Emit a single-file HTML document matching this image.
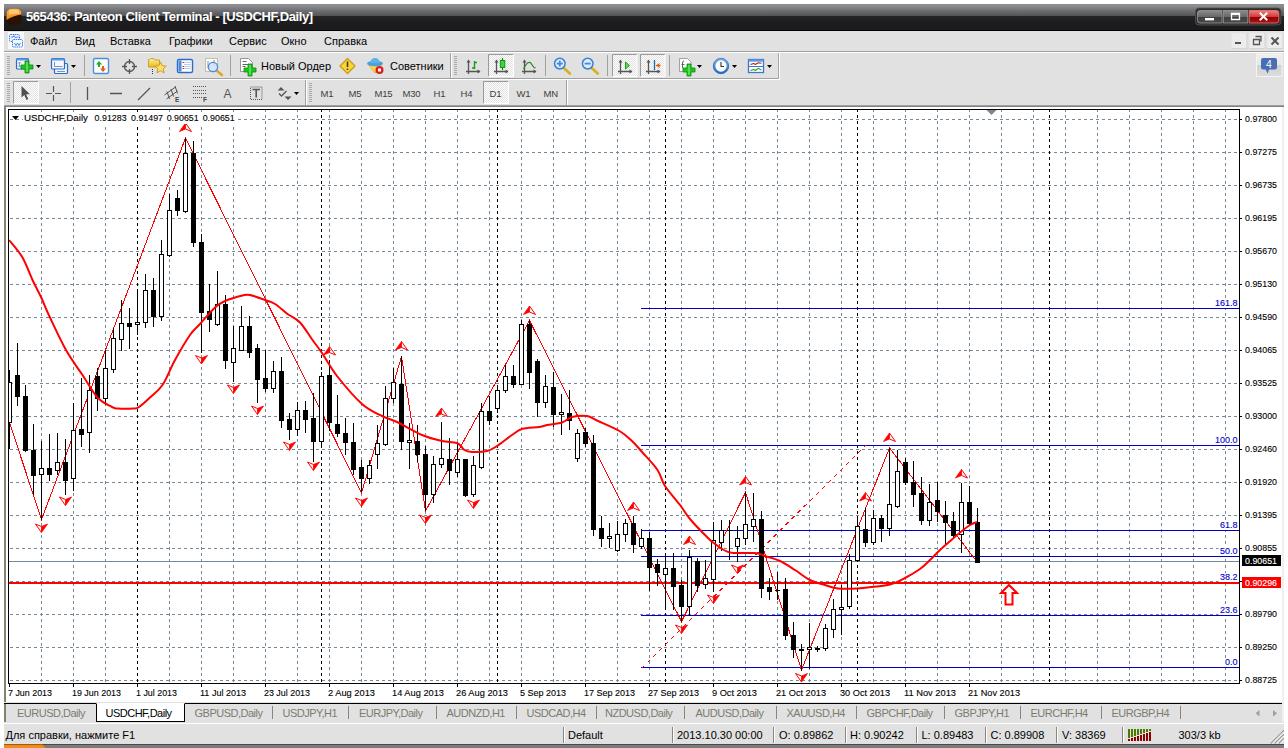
<!DOCTYPE html>
<html><head><meta charset="utf-8"><title>565436: Panteon Client Terminal - [USDCHF,Daily]</title>
<style>
*{box-sizing:border-box;margin:0;padding:0}
html,body{width:1288px;height:748px;overflow:hidden;background:#fff}
body{position:relative;font-family:"Liberation Sans",Arial,sans-serif;font-size:11px;color:#000}
.abs{position:absolute}
#titlebar{left:4px;top:4px;width:1280px;height:27px;background:linear-gradient(#88898d 0,#8e8f93 1.5px,#6c6d70 7px,#545456 11.9px,#252527 12px,#1d1d1f 18px,#1b1b1d 25.5px,#000 26px)}
#title{left:26px;top:8px;color:#fff;font-weight:bold;font-size:13px;letter-spacing:-0.42px;white-space:nowrap;line-height:18px}
#menubar{left:4px;top:31px;width:1280px;height:21px;background:#e1e1e1}
.mi{top:34px;line-height:14px;white-space:nowrap;font-size:11px}
#tb{left:4px;top:52px;width:1280px;height:54px;background:#e1e1e1}
.hl{height:1px;left:4px;width:1280px}
.tab{top:706px;line-height:14px;white-space:nowrap;color:#7d7b6e;font-size:11px;letter-spacing:-0.5px}
.tsep{top:706px;width:1px;height:13px;background:#8a887c}
.st{top:728px;line-height:14px;white-space:nowrap;font-size:11px}
.ssep{top:727px;width:1px;height:16px;background:#868686;border-right:1px solid #fff;box-sizing:content-box}
.tf{top:88px;line-height:12px;font-size:9.5px;color:#404040;white-space:nowrap;letter-spacing:-0.2px}
.vsep{width:1px;background:#a0a0a0}
.tbt{top:59px;line-height:14px;white-space:nowrap;font-size:11px}
</style></head><body>
<div id="titlebar" class="abs"></div>
<div id="title" class="abs">565436: Panteon Client Terminal - [USDCHF,Daily]</div>
<div id="menubar" class="abs"></div>
<div class="abs mi" style="left:30px">Файл</div>
<div class="abs mi" style="left:75px">Вид</div>
<div class="abs mi" style="left:110px">Вставка</div>
<div class="abs mi" style="left:169px">Графики</div>
<div class="abs mi" style="left:229px">Сервис</div>
<div class="abs mi" style="left:281px">Окно</div>
<div class="abs mi" style="left:324px">Справка</div>
<div id="tb" class="abs"></div>
<div class="abs hl" style="top:51px;background:#a0a0a0"></div><div class="abs hl" style="top:52px;background:#fff"></div>
<div class="abs hl" style="top:78px;background:#a0a0a0;width:776px"></div><div class="abs hl" style="top:79px;background:#fff;width:776px"></div>
<div class="abs hl" style="top:105px;background:#a0a0a0"></div>
<div class="abs hl" style="top:106px;background:#808080"></div>
<svg id="icons" width="1288" height="108" viewBox="0 0 1288 108" style="position:absolute;left:0;top:0" font-family="Liberation Sans, Arial, sans-serif">
<defs><linearGradient id="gOr" x1="0" y1="0" x2="0" y2="1"><stop offset="0" stop-color="#ffb24a"/><stop offset="1" stop-color="#f28a14"/></linearGradient><linearGradient id="gBtn" x1="0" y1="0" x2="0" y2="1"><stop offset="0" stop-color="#8a8a8a"/><stop offset="0.48" stop-color="#6a6a6a"/><stop offset="0.5" stop-color="#3e3e3e"/><stop offset="1" stop-color="#4a4a4a"/></linearGradient><linearGradient id="gCls" x1="0" y1="0" x2="0" y2="1"><stop offset="0" stop-color="#f08080"/><stop offset="0.48" stop-color="#d43c3c"/><stop offset="0.5" stop-color="#8e0000"/><stop offset="1" stop-color="#b01010"/></linearGradient><linearGradient id="gBlue" x1="0" y1="0" x2="0" y2="1"><stop offset="0" stop-color="#7ab4ee"/><stop offset="1" stop-color="#2a6cc8"/></linearGradient><linearGradient id="gGold" x1="0" y1="0" x2="0" y2="1"><stop offset="0" stop-color="#fff0a0"/><stop offset="1" stop-color="#e8b820"/></linearGradient><linearGradient id="gChat" x1="0" y1="0" x2="0" y2="1"><stop offset="0" stop-color="#efefef"/><stop offset="0.5" stop-color="#e8e8e8"/><stop offset="0.5" stop-color="#d2d2d2"/><stop offset="1" stop-color="#dcdcdc"/></linearGradient><pattern id="chk" width="2" height="2" patternUnits="userSpaceOnUse"><rect width="2" height="2" fill="#fff"/><rect width="1" height="1" fill="#e1e1e1"/><rect x="1" y="1" width="1" height="1" fill="#e1e1e1"/></pattern><g id="plus"><path d="M4 0h4v4h4v4h-4v4h-4v-4h-4v-4h4z" fill="#1fc41f" stroke="#0a8a0a" stroke-width="0.8"/><path d="M5 1h2v10h-2z" fill="#7af07a" opacity="0.6"/></g><path id="dd" d="M0 0h5l-2.5 3z" fill="#000"/><g id="grip"><path d="M0 0.5h3M0 2.5h3M0 4.5h3M0 6.5h3M0 8.5h3M0 10.5h3M0 12.5h3M0 14.5h3M0 16.5h3M0 18.5h3" stroke="#a8a8a8" stroke-width="1" shape-rendering="crispEdges"/></g><g id="axes"><path d="M2.5 0.5V14M0 11.5H14" stroke="#555" stroke-width="1.3" fill="none"/><path d="M2.5 -0.5l-2 3h4zM14.5 11.5l-3 -2v4z" fill="#555"/></g></defs>
<rect x="6.5" y="8.5" width="15" height="16.5" rx="5" ry="5" fill="#2a1100"/>
<path d="M6.5 20 V13.5 a5 5 0 0 1 5 -5 h5 a5 5 0 0 1 5 5 V14.5 Q13 15.5 6.5 20z" fill="url(#gOr)"/>
<path d="M9 14.5v-2.5a3 3 0 0 1 3-2.5h4a3 3 0 0 1 3 2.5v1.5z" fill="#ffd59a" opacity="0.7"/>
<rect x="1195.5" y="8" width="85.5" height="17" rx="3.5" fill="#2c2c2c" stroke="#555" stroke-width="0.8"/>
<path d="M1200 10.5h22v12.5h-22a2.5 2.5 0 0 1-2.5-2.5v-7.500a2.500 2.500 0 0 1 2.500-2.500z" fill="url(#gBtn)" stroke="#9a9a9a" stroke-width="0.8"/>
<rect x="1223.300" y="10.500" width="24.500" height="12.500" fill="url(#gBtn)" stroke="#9a9a9a" stroke-width="0.8"/>
<path d="M1249.300 10.500h27a2.500 2.500 0 0 1 2.500 2.500v7.500a2.500 2.500 0 0 1-2.500 2.500h-27z" fill="url(#gCls)" stroke="#ee7a7a" stroke-width="0.8"/>
<rect x="1205" y="18" width="9" height="2.400" fill="#fff"/>
<path d="M1231.500 13.500h8v6h-8z" fill="none" stroke="#fff" stroke-width="1.3"/><path d="M1231 13.300h9v1.600h-9z" fill="#fff"/>
<path d="M1260.500 13.500l6 6M1266.500 13.500l-6 6" stroke="#fff" stroke-width="2" stroke-linecap="square"/>
<rect x="1231.5" y="33" width="15.500" height="15.500" fill="#ececec" stroke="#e6e6e6" stroke-width="1"/>
<path d="M1231.5 48.500h15.500v-15.500" fill="none" stroke="#d4d4d4" stroke-width="1"/>
<rect x="1249.5" y="33" width="15.500" height="15.500" fill="#ececec" stroke="#e6e6e6" stroke-width="1"/>
<path d="M1249.5 48.500h15.500v-15.500" fill="none" stroke="#d4d4d4" stroke-width="1"/>
<rect x="1267.5" y="33" width="15.500" height="15.500" fill="#ececec" stroke="#e6e6e6" stroke-width="1"/>
<path d="M1267.5 48.500h15.500v-15.500" fill="none" stroke="#d4d4d4" stroke-width="1"/>
<rect x="1235" y="42" width="6" height="2" fill="#555"/>
<path d="M1255.500 36.500h5.500v5M1253.500 39.500h6v5h-6z" fill="none" stroke="#555" stroke-width="1.300"/>
<path d="M1271.500 37.500l7 7M1278.500 37.500l-7 7" stroke="#555" stroke-width="2"/>
<rect x="8" y="32" width="16" height="17" fill="#fafafa"/>
<rect x="9.500" y="34.500" width="10" height="7" rx="1" fill="#eef5ff" stroke="#3a7ae8" stroke-width="1" stroke-dasharray="1.500 0.700"/>
<rect x="12.500" y="39.500" width="10" height="7.500" rx="1" fill="#f4f9ff" stroke="#3a7ae8" stroke-width="1" stroke-dasharray="1.500 0.700"/>
<path d="M14.500 43l1.500 2.500 1.500-2.500 1.500 2.500 1.500-2.500" fill="none" stroke="#3a7ae8" stroke-width="0.900"/>
<path d="M11 37h2l1-1.500 1.500 2.500 1-1h2" fill="none" stroke="#3a7ae8" stroke-width="0.900"/>
<use href="#grip" x="7" y="56"/>
<rect x="16.500" y="58.500" width="12" height="10.500" rx="1" fill="#f4f8fd" stroke="#2a6cc8" stroke-width="1.200"/><rect x="16.500" y="58.500" width="12" height="2" fill="#5a9ae0"/>
<path d="M19.500 62v5M18 63.500l1.500-1.500 1.500 1.500M18 65.500l1.500 1.500 1.500-1.500" stroke="#6a8ab0" stroke-width="0.800" fill="none"/>
<use href="#plus" x="21" y="61"/>
<use href="#dd" x="36" y="65"/>
<rect x="54.500" y="63.500" width="13" height="10" rx="1" fill="#f4f8fd" stroke="#2a6cc8" stroke-width="1.200"/>
<rect x="51.500" y="58.500" width="13" height="10.500" rx="1" fill="#f4f8fd" stroke="#2a6cc8" stroke-width="1.200"/><rect x="51.500" y="58.500" width="13" height="2" fill="#5a9ae0"/>
<path d="M54.500 62v4.500M54.500 66.500h8M57 71.500h8" stroke="#6a8ab0" stroke-width="0.900" fill="none"/>
<use href="#dd" x="71" y="65"/>
<rect x="84" y="55" width="1" height="21" fill="#a0a0a0"/>
<rect x="93.500" y="58.500" width="15" height="15" rx="1.500" fill="#fdfdfd" stroke="#4a90e0" stroke-width="1.400"/>
<path d="M99 61l-3 3.500h2v2.500h2v-2.500h2z" fill="#1fae1f"/><path d="M103 72l-3-3.500h2v-2.500h2v2.500h2z" fill="#e85a20"/>
<circle cx="129.500" cy="66.500" r="5" fill="none" stroke="#555" stroke-width="1.300"/><path d="M129.500 59v5M129.500 69v5M122 66.500h5M132 66.500h5" stroke="#555" stroke-width="1.300"/>
<path d="M148.500 67v-7.500h1l1-1h3l1 1.500h5v7z" fill="url(#gGold)" stroke="#c89a18" stroke-width="0.900"/>
<path d="M160.500 62l1.700 3.700 4 .4-3 2.700.9 4-3.600-2.100-3.600 2.100.9-4-3-2.700 4-.4z" fill="#ffe060" stroke="#c8961a" stroke-width="0.900"/>
<path d="M152.500 69v5" stroke="#333" stroke-width="1" stroke-dasharray="1 1"/>
<rect x="177.500" y="59.500" width="15" height="13" rx="1.500" fill="#fff" stroke="#2a6cc8" stroke-width="1.400"/><rect x="178.500" y="60.500" width="3" height="11" fill="#4a8ae0"/>
<path d="M184 62.500h7M184 64.500h7M184 66.500h7M184 68.500h7" stroke="#9ab8e8" stroke-width="0.700"/><path d="M182.500 62h1.500v1h-1.500zM182.500 66h1.500v1h-1.500zM182.500 68h1.500v1h-1.500z" fill="#e02020"/>
<rect x="205.500" y="58.500" width="12" height="13" fill="#fbfaf5" stroke="#c8bfa8" stroke-width="1"/>
<path d="M208 61v7M214 60v6" stroke="#8a94a8" stroke-width="1"/>
<path d="M216.500 70.500l5.500 4.500" stroke="#d8a820" stroke-width="2.400" stroke-linecap="round"/>
<circle cx="213" cy="67" r="4.600" fill="#cfe2f6" fill-opacity="0.850" stroke="#4a8ad8" stroke-width="1.300"/>
<rect x="230" y="55" width="1" height="21" fill="#a0a0a0"/>
<path d="M240.500 58.500h8l4 4v9h-12z" fill="#fdfdfd" stroke="#8a8a8a" stroke-width="0.900"/><path d="M242.500 61.500h4M242.500 64.500h6M242.500 66.500h3" stroke="#666" stroke-width="1"/>
<use href="#plus" x="244" y="64"/>
<path d="M347.500 58.500l7.500 7.500-7.500 7.500-7.500-7.500z" fill="#f8d838" stroke="#c8981a" stroke-width="1.200" stroke-linejoin="round"/><path d="M347.500 61.500v5.500M347.500 68.500v1.500" stroke="#4a3a10" stroke-width="1.600"/>
<path d="M368 64l7 9 7-9z" fill="#f8d848" stroke="#d8a820" stroke-width="0.800"/>
<ellipse cx="375" cy="63.500" rx="8" ry="2.800" fill="#4aa0d8"/><path d="M370.500 63q0-5 4.500-5t4.500 5z" fill="#5ab4e8"/>
<circle cx="379.500" cy="70" r="4" fill="#d82020"/><rect x="378" y="68.500" width="3" height="3" fill="#fff"/>
<rect x="450" y="53" width="1" height="25" fill="#a0a0a0"/><rect x="451" y="53" width="1" height="25" fill="#fff"/>
<use href="#grip" x="454" y="56"/>
<use href="#axes" x="466" y="60"/><path d="M474.500 61v8M474.500 62.500h2.500M472 68h2.500" stroke="#1a9a1a" stroke-width="1.400" fill="none"/>
<rect x="488.500" y="54.500" width="25" height="22" fill="url(#chk)"/><path d="M488.500 76.500v-22h25" fill="none" stroke="#9a9a9a" stroke-width="1"/><path d="M488.500 76.500h25v-22" fill="none" stroke="#fff" stroke-width="1"/>
<use href="#axes" x="494" y="60"/><path d="M502.500 58v12" stroke="#0a8a0a" stroke-width="1.200"/><rect x="500.300" y="60.500" width="4.500" height="7" fill="#3ad83a" stroke="#0a8a0a" stroke-width="0.900"/>
<use href="#axes" x="522" y="60"/><path d="M523.500 69q5-10 8-5t4 3.500" stroke="#2a8a2a" stroke-width="1.300" fill="none"/>
<rect x="545" y="55" width="1" height="21" fill="#a0a0a0"/>
<path d="M563.8 68l6 5.500" stroke="#d8b020" stroke-width="2.800" stroke-linecap="round"/>
<circle cx="559.8" cy="63.600" r="5.300" fill="#dcecfb" stroke="#3a80d8" stroke-width="1.500"/>
<path d="M556.8 63.600h6" stroke="#4a8ac8" stroke-width="1.800"/>
<path d="M559.8 60.600v6" stroke="#4a8ac8" stroke-width="1.800"/>
<path d="M591.7 68l6 5.500" stroke="#d8b020" stroke-width="2.800" stroke-linecap="round"/>
<circle cx="587.7" cy="63.600" r="5.300" fill="#dcecfb" stroke="#3a80d8" stroke-width="1.500"/>
<path d="M584.7 63.600h6" stroke="#4a8ac8" stroke-width="1.800"/>
<rect x="607" y="55" width="1" height="21" fill="#a0a0a0"/>
<rect x="612.5" y="54.500" width="24.500" height="22" fill="url(#chk)"/><path d="M612.5 76.500v-22h24.500" fill="none" stroke="#9a9a9a" stroke-width="1"/><path d="M612.5 76.500h24.500v-22" fill="none" stroke="#fff" stroke-width="1"/>
<rect x="640.5" y="54.500" width="24.500" height="22" fill="url(#chk)"/><path d="M640.5 76.500v-22h24.500" fill="none" stroke="#9a9a9a" stroke-width="1"/><path d="M640.5 76.500h24.500v-22" fill="none" stroke="#fff" stroke-width="1"/>
<use href="#axes" x="618" y="60"/><path d="M625.500 62l4 3.500-4 3.500z" fill="#5ae05a" stroke="#0a9a0a" stroke-width="0.900"/>
<use href="#axes" x="646" y="60"/><path d="M654.500 60v10" stroke="#1a6aa8" stroke-width="1.300"/><path d="M656 65.500l3.500-2.500v5z" fill="#e85a10"/><path d="M656 65.500h4.500" stroke="#e85a10" stroke-width="1"/>
<rect x="669" y="55" width="1" height="21" fill="#a0a0a0"/>
<path d="M679.500 58.500h8l3.500 3.500v9.500h-11.500z" fill="#fdfdfd" stroke="#9a9a9a" stroke-width="0.900"/><path d="M684 61q-1.500 0-1.500 2v5M681.500 64.500h3" stroke="#555" stroke-width="0.900" fill="none"/>
<use href="#plus" x="683" y="64"/>
<use href="#dd" x="697" y="65"/>
<circle cx="721" cy="66" r="6.800" fill="#fafcff" stroke="url(#gBlue)" stroke-width="2.300"/><circle cx="721" cy="66" r="7.700" fill="none" stroke="#1a58b8" stroke-width="0.600"/><path d="M721 62v4.500h3" stroke="#333" stroke-width="1.100" fill="none"/>
<use href="#dd" x="732" y="65"/>
<rect x="748.500" y="59.500" width="15" height="13" fill="#fff" stroke="#3a78d0" stroke-width="1.300"/><rect x="748.500" y="59.500" width="15" height="2.200" fill="#5a9ae8"/><path d="M749 66.500h14" stroke="#3a78d0" stroke-width="1"/>
<path d="M750.500 64.500l3-1 2 .8 3-1.500 3 .5" stroke="#a82020" stroke-width="1.100" fill="none"/><path d="M750.500 70.500l3-1 2 .8 3-2 3 1.800" stroke="#1a9a1a" stroke-width="1.100" fill="none"/>
<use href="#dd" x="767" y="65"/>
<rect x="778" y="53" width="1" height="26" fill="#a8a8a8"/><rect x="779" y="53" width="1" height="27" fill="#fff"/>
<rect x="1256.500" y="54" width="25.500" height="22.500" fill="url(#gChat)" stroke="#f4f4f4" stroke-width="1"/>
<path d="M1263 58h12a2 2 0 0 1 2 2v7.500a2 2 0 0 1-2 2h-6l-1.300 4.200-2-4.200h-2.700a2 2 0 0 1-2-2v-7.500a2 2 0 0 1 2-2z" fill="#4a6eb4"/>
<text x="1269" y="68" font-size="10.500" fill="#fff" text-anchor="middle">4</text>
<use href="#grip" x="7" y="83"/>
<rect x="13.500" y="81.500" width="25" height="22" fill="url(#chk)"/><path d="M13.500 103.500v-22h25" fill="none" stroke="#9a9a9a" stroke-width="1"/><path d="M13.500 103.500h25v-22" fill="none" stroke="#fff" stroke-width="1"/>
<path d="M21.500 86v11.500l2.800-2.600 2.200 5 1.800-.8-2.200-4.800h3.800z" fill="#505050"/>
<path d="M53.500 86v6M53.500 95v6M46 93.500h6M55 93.500h6" stroke="#555" stroke-width="1.200"/>
<rect x="70" y="82" width="1" height="21" fill="#a0a0a0"/>
<path d="M87.500 87v13M110 93.500h12M138 100l12-12" stroke="#555" stroke-width="1.300"/>
<path d="M164.500 95l11-8M166.500 99l11-8M167 91.500l2.500 7.500M171 89l2.500 7.500M175 86l2.500 7.500" stroke="#555" stroke-width="1" fill="none"/>
<text x="175" y="101.500" font-size="6.500" font-weight="bold" fill="#444">E</text>
<path d="M193 86.500h13M193 90h13M193 93.500h13M193 97.500h10" stroke="#555" stroke-width="1" stroke-dasharray="1 1" shape-rendering="crispEdges"/>
<text x="203" y="101.500" font-size="6.500" font-weight="bold" fill="#444">F</text>
<text x="223.500" y="98" font-size="12" fill="#555">A</text>
<rect x="250.500" y="87" width="11.500" height="12.500" fill="none" stroke="#555" stroke-width="1" stroke-dasharray="1 1"/><path d="M252.500 89.500h7.500M256.200 89.500v8" stroke="#555" stroke-width="1.600"/>
<path d="M281 87l3.500 3.500h-7zM288 100l3.500-3.500h-7z" fill="#555"/><path d="M279 93.500l2.500 2.500 5-5" stroke="#555" stroke-width="1.300" fill="none"/>
<use href="#dd" x="294" y="92"/>
<rect x="305" y="80" width="1" height="25" fill="#a0a0a0"/><rect x="306" y="80" width="1" height="25" fill="#fff"/>
<use href="#grip" x="309" y="83"/>
<rect x="483.500" y="81.500" width="25" height="22" fill="url(#chk)"/><path d="M483.500 103.500v-22h25" fill="none" stroke="#9a9a9a" stroke-width="1"/><path d="M483.500 103.500h25v-22" fill="none" stroke="#fff" stroke-width="1"/>
<rect x="566" y="80" width="1" height="25" fill="#a0a0a0"/><rect x="567" y="80" width="1" height="25" fill="#fff"/>
</svg>
<div class="abs tbt" style="left:261px">Новый Ордер</div>
<div class="abs tbt" style="left:390px">Советники</div>
<div class="abs tf" style="left:320.5px">M1</div>
<div class="abs tf" style="left:348.5px">M5</div>
<div class="abs tf" style="left:374.5px">M15</div>
<div class="abs tf" style="left:402.5px">M30</div>
<div class="abs tf" style="left:433.5px">H1</div>
<div class="abs tf" style="left:460.5px">H4</div>
<div class="abs tf" style="left:489.5px">D1</div>
<div class="abs tf" style="left:516.5px">W1</div>
<div class="abs tf" style="left:543.5px">MN</div>
<svg id="chart" width="1288" height="748" viewBox="0 0 1288 748" style="position:absolute;left:0;top:0" font-family="Liberation Sans, Arial, sans-serif" font-size="9.7px" stroke-width="0.12">
<rect x="8" y="109" width="1274" height="593" fill="#fff"/>
<defs><clipPath id="cc"><rect x="9" y="110" width="1230" height="573"/></clipPath></defs>
<g shape-rendering="crispEdges">
<g stroke="#778899" stroke-width="1" stroke-dasharray="3 3" fill="none">
<path d="M10 119.5H1239 M10 152.5H1239 M10 185.5H1239 M10 218.5H1239 M10 251.5H1239 M10 284.5H1239 M10 317.5H1239 M10 350.5H1239 M10 383.5H1239 M10 416.5H1239 M10 449.5H1239 M10 482.5H1239 M10 515.5H1239 M10 548.5H1239 M10 581.5H1239 M10 614.5H1239 M10 647.5H1239 M10 680.5H1239"/>
<path d="M41.5 109V683 M73.5 109V683 M105.5 109V683 M169.5 109V683 M201.5 109V683 M233.5 109V683 M265.5 109V683 M297.5 109V683 M329.5 109V683 M361.5 109V683 M393.5 109V683 M425.5 109V683 M457.5 109V683 M489.5 109V683 M521.5 109V683 M553.5 109V683 M585.5 109V683 M617.5 109V683 M649.5 109V683 M681.5 109V683 M713.5 109V683 M745.5 109V683 M777.5 109V683 M809.5 109V683 M841.5 109V683 M873.5 109V683 M905.5 109V683 M937.5 109V683 M969.5 109V683 M1001.5 109V683 M1033.5 109V683 M1065.5 109V683 M1097.5 109V683 M1129.5 109V683 M1161.5 109V683 M1193.5 109V683 M1225.5 109V683" stroke-dashoffset="0"/>
</g>
<path d="M137.5 109V683 M321.5 109V683 M497.5 109V683 M665.5 109V683 M857.5 109V683 M1049.5 109V683" stroke="#000" stroke-width="1" stroke-dasharray="3 3" fill="none"/>
<rect x="9" y="561" width="1231" height="1" fill="#778899"/>
<rect x="641" y="308" width="599" height="1" fill="#0000cd"/>
<rect x="641" y="445" width="599" height="1" fill="#0000cd"/>
<rect x="641" y="530" width="599" height="1" fill="#0000cd"/>
<rect x="641" y="556" width="599" height="1" fill="#0000cd"/>
<rect x="641" y="582" width="599" height="1" fill="#0000cd"/>
<rect x="641" y="615" width="599" height="1" fill="#0000cd"/>
<rect x="641" y="667" width="599" height="1" fill="#0000cd"/>
<rect x="9" y="582" width="1231" height="2" fill="#ff0000"/>
</g>
<path d="M641.5 668.5L865.5 445.5" stroke="#ff0000" stroke-width="1" stroke-dasharray="4.24 4.24" fill="none" shape-rendering="crispEdges"/>
<polyline points="8.5,419.5 41.5,519.5 185.5,138.0 361.5,493.0 401.5,356.5 425.5,511.0 529.5,320.5 681.5,621.5 745.5,492.5 801.5,670.0 889.5,448.0 977.5,562.5" stroke="#ff0000" stroke-width="1" fill="none" shape-rendering="crispEdges" clip-path="url(#cc)"/>
<g shape-rendering="crispEdges" clip-path="url(#cc)">
<path d="M9 370h1v79h-1zM7 382h5v41h-5zM17 343h1v63h-1zM15 375h5v22h-5zM25 385h1v67h-1zM23 396h5v55h-5zM33 424h1v71h-1zM31 450h5v26h-5zM41 441h1v79h-1zM39 468h5v7h-5zM49 434h1v47h-1zM47 468h5v7h-5zM57 433h1v42h-1zM55 462h5v9h-5zM65 439h1v56h-1zM63 462h5v19h-5zM73 403h1v88h-1zM71 430h5v49h-5zM81 378h1v69h-1zM79 429h5v6h-5zM89 375h1v78h-1zM87 390h5v43h-5zM97 368h1v43h-1zM95 376h5v23h-5zM105 350h1v55h-1zM103 368h5v31h-5zM113 328h1v45h-1zM111 338h5v32h-5zM121 300h1v51h-1zM119 323h5v17h-5zM129 308h1v41h-1zM127 323h5v4h-5zM137 290h1v45h-1zM135 322h5v3h-5zM145 274h1v54h-1zM143 290h5v33h-5zM153 278h1v49h-1zM151 290h5v27h-5zM161 240h1v81h-1zM159 254h5v63h-5zM169 194h1v63h-1zM167 210h5v46h-5zM177 190h1v26h-1zM175 198h5v13h-5zM185 138h1v75h-1zM183 153h5v59h-5zM193 141h1v106h-1zM191 153h5v90h-5zM201 234h1v119h-1zM199 242h5v71h-5zM209 284h1v48h-1zM207 311h5v9h-5zM217 271h1v55h-1zM215 304h5v21h-5zM225 295h1v74h-1zM223 304h5v57h-5zM233 326h1v56h-1zM231 348h5v15h-5zM241 306h1v45h-1zM239 326h5v25h-5zM249 316h1v42h-1zM247 326h5v27h-5zM257 344h1v59h-1zM255 348h5v32h-5zM265 350h1v42h-1zM263 378h5v11h-5zM273 361h1v32h-1zM271 371h5v18h-5zM281 357h1v71h-1zM279 371h5v50h-5zM289 413h1v27h-1zM287 419h5v11h-5zM297 402h1v34h-1zM295 410h5v20h-5zM305 401h1v32h-1zM303 410h5v10h-5zM313 393h1v69h-1zM311 418h5v24h-5zM321 372h1v76h-1zM319 376h5v66h-5zM329 360h1v71h-1zM327 375h5v48h-5zM337 395h1v42h-1zM335 424h5v10h-5zM345 418h1v37h-1zM343 433h5v10h-5zM353 423h1v52h-1zM351 442h5v28h-5zM361 460h1v32h-1zM359 467h5v12h-5zM369 460h1v24h-1zM367 465h5v14h-5zM377 425h1v44h-1zM375 443h5v12h-5zM385 386h1v60h-1zM383 398h5v47h-5zM393 368h1v35h-1zM391 382h5v17h-5zM401 356h1v94h-1zM399 384h5v58h-5zM409 423h1v46h-1zM407 440h5v3h-5zM417 425h1v37h-1zM415 441h5v14h-5zM425 446h1v65h-1zM423 454h5v41h-5zM433 456h1v47h-1zM431 464h5v31h-5zM441 422h1v46h-1zM439 458h5v7h-5zM449 438h1v47h-1zM447 459h5v12h-5zM457 444h1v33h-1zM455 459h5v14h-5zM465 459h1v38h-1zM463 459h5v37h-5zM473 456h1v41h-1zM471 465h5v30h-5zM481 403h1v66h-1zM479 411h5v57h-5zM489 396h1v29h-1zM487 411h5v10h-5zM497 385h1v28h-1zM495 390h5v19h-5zM505 365h1v28h-1zM503 376h5v15h-5zM513 365h1v23h-1zM511 376h5v9h-5zM521 320h1v65h-1zM519 324h5v61h-5zM529 320h1v69h-1zM527 324h5v49h-5zM537 359h1v58h-1zM535 361h5v42h-5zM545 375h1v33h-1zM543 386h5v17h-5zM553 372h1v55h-1zM551 387h5v28h-5zM561 394h1v41h-1zM559 412h5v3h-5zM569 390h1v40h-1zM567 413h5v8h-5zM577 429h1v33h-1zM575 433h5v26h-5zM585 428h1v19h-1zM583 432h5v12h-5zM593 435h1v101h-1zM591 443h5v87h-5zM601 516h1v31h-1zM599 528h5v11h-5zM609 523h1v25h-1zM607 536h5v3h-5zM617 521h1v31h-1zM615 534h5v17h-5zM625 519h1v23h-1zM623 523h5v12h-5zM633 516h1v37h-1zM631 523h5v22h-5zM641 529h1v20h-1zM639 538h5v9h-5zM649 532h1v59h-1zM647 538h5v30h-5zM657 559h1v27h-1zM655 564h5v9h-5zM665 553h1v57h-1zM663 568h5v7h-5zM673 553h1v57h-1zM671 568h5v19h-5zM681 580h1v42h-1zM679 585h5v22h-5zM689 550h1v66h-1zM687 557h5v50h-5zM697 558h1v34h-1zM695 561h5v25h-5zM705 560h1v29h-1zM703 578h5v7h-5zM713 522h1v70h-1zM711 540h5v40h-5zM721 520h1v31h-1zM719 530h5v13h-5zM729 520h1v40h-1zM727 530h5v1h-5zM737 526h1v36h-1zM735 538h5v9h-5zM745 492h1v53h-1zM743 524h5v15h-5zM753 493h1v49h-1zM751 519h5v8h-5zM761 511h1v87h-1zM759 519h5v70h-5zM769 578h1v22h-1zM767 587h5v5h-5zM777 572h1v28h-1zM775 590h5v1h-5zM785 578h1v62h-1zM783 589h5v47h-5zM793 622h1v36h-1zM791 635h5v15h-5zM801 644h1v27h-1zM799 649h5v2h-5zM809 623h1v46h-1zM807 647h5v3h-5zM817 646h1v6h-1zM815 648h5v2h-5zM825 624h1v27h-1zM823 628h5v21h-5zM833 599h1v39h-1zM831 609h5v21h-5zM841 585h1v50h-1zM839 607h5v3h-5zM849 554h1v55h-1zM847 560h5v47h-5zM857 516h1v46h-1zM855 526h5v35h-5zM865 508h1v39h-1zM863 529h5v14h-5zM873 510h1v35h-1zM871 518h5v25h-5zM881 515h1v27h-1zM879 518h5v11h-5zM889 448h1v88h-1zM887 504h5v25h-5zM897 450h1v58h-1zM895 471h5v36h-5zM905 458h1v27h-1zM903 462h5v21h-5zM913 461h1v46h-1zM911 482h5v13h-5zM921 477h1v48h-1zM919 493h5v28h-5zM929 484h1v42h-1zM927 502h5v19h-5zM937 482h1v40h-1zM935 500h5v12h-5zM945 501h1v43h-1zM943 515h5v8h-5zM953 512h1v27h-1zM951 521h5v15h-5zM961 483h1v70h-1zM959 502h5v33h-5zM969 486h1v39h-1zM967 502h5v22h-5zM977 508h1v55h-1zM975 522h5v41h-5z" fill="#000"/>
<path d="M8 383h3v39h-3zM40 469h3v5h-3zM56 463h3v7h-3zM72 431h3v47h-3zM88 391h3v41h-3zM104 369h3v29h-3zM112 339h3v30h-3zM120 324h3v15h-3zM136 323h3v1h-3zM144 291h3v31h-3zM160 255h3v61h-3zM168 211h3v44h-3zM184 154h3v57h-3zM216 305h3v19h-3zM232 349h3v13h-3zM240 327h3v23h-3zM272 372h3v16h-3zM296 411h3v18h-3zM320 377h3v64h-3zM368 466h3v12h-3zM376 444h3v10h-3zM384 399h3v45h-3zM392 383h3v15h-3zM408 441h3v1h-3zM432 465h3v29h-3zM440 459h3v5h-3zM456 460h3v12h-3zM472 466h3v28h-3zM480 412h3v55h-3zM496 391h3v17h-3zM504 377h3v13h-3zM520 325h3v59h-3zM544 387h3v15h-3zM560 413h3v1h-3zM576 434h3v24h-3zM608 537h3v1h-3zM616 535h3v15h-3zM624 524h3v10h-3zM640 539h3v7h-3zM664 569h3v5h-3zM688 558h3v48h-3zM704 579h3v5h-3zM712 541h3v38h-3zM720 531h3v11h-3zM736 539h3v7h-3zM744 525h3v13h-3zM752 520h3v6h-3zM808 648h3v1h-3zM824 629h3v19h-3zM832 610h3v19h-3zM840 608h3v1h-3zM848 561h3v45h-3zM856 527h3v33h-3zM872 519h3v23h-3zM888 505h3v23h-3zM896 472h3v34h-3zM928 503h3v17h-3zM960 503h3v31h-3z" fill="#fff"/>
</g>
<path d="M9 240C11.2 242.9 18.6 250.8 22.5 257.5C26.4 264.2 29.4 273.4 32.5 280C35.6 286.6 38.1 290.8 41 297C43.9 303.2 45.8 308.7 50 317.5C54.2 326.3 60.6 340.4 66 350C71.4 359.6 77.2 367.1 82.5 375C87.8 382.9 92.6 392.2 97.5 397.5C102.4 402.8 108.6 405.2 112 407C115.4 408.8 114.5 408.2 118 408.5C121.5 408.8 129.5 408.8 133 408.5C136.5 408.2 136.2 408.8 139 407C141.8 405.2 146.1 401.2 150 397.5C153.9 393.8 158.3 391.2 162.5 385C166.7 378.8 170.4 368.3 175 360C179.6 351.7 185.8 341.0 190 335C194.2 329.0 195.8 328.6 200 324C204.2 319.4 210.8 311.3 215 307.5C219.2 303.7 220.4 303.0 225 301C229.6 299.0 238.3 296.5 242.5 295.5C246.7 294.5 246.2 294.2 250 295C253.8 295.8 260.8 298.5 265 300C269.2 301.5 271.2 301.7 275 304C278.8 306.3 283.3 310.9 287.5 314C291.7 317.1 295.8 318.2 300 322.5C304.2 326.8 308.8 334.9 312.5 340C316.2 345.1 317.9 347.0 322 353C326.1 359.0 330.3 367.5 337 376C343.7 384.5 354.5 397.3 362 404C369.5 410.7 376.2 413.0 382 416C387.8 419.0 390.3 418.8 397 422C403.7 425.2 414.5 431.8 422 435C429.5 438.2 436.2 439.7 442 441C447.8 442.3 453.2 441.5 457 443C460.8 444.5 462.0 448.5 464.5 450C467.0 451.5 468.2 451.8 472 452C475.8 452.2 482.8 452.0 487 451C491.2 450.0 492.8 448.7 497 446C501.2 443.3 507.8 437.8 512 435C516.2 432.2 517.4 430.3 522 429C526.6 427.7 535.3 427.7 539.5 427C543.7 426.3 543.2 425.8 547 425C550.8 424.2 557.8 423.8 562 422.5C566.2 421.2 567.8 418.1 572 417C576.2 415.9 582.8 415.4 587 416C591.2 416.6 591.6 418.0 597 420.5C602.4 423.0 613.7 427.6 619.5 431C625.3 434.4 628.2 437.4 632 441C635.8 444.6 638.2 447.7 642.5 452.5C646.8 457.3 653.8 464.4 657.5 470C661.2 475.6 661.2 480.2 665 486C668.8 491.8 675.8 499.5 680 505C684.2 510.5 685.8 514.0 690 519C694.2 524.0 700.8 530.8 705 535C709.2 539.2 710.8 541.1 715 544C719.2 546.9 723.3 551.0 730 552.5C736.7 554.0 749.2 552.4 755 553C760.8 553.6 760.8 554.7 765 556C769.2 557.3 775.0 558.7 780 561C785.0 563.3 790.0 566.8 795 570C800.0 573.2 805.0 577.5 810 580C815.0 582.5 820.3 583.6 825 585C829.7 586.4 832.7 587.9 838 588.5C843.3 589.1 851.3 588.8 857 588.5C862.7 588.2 866.5 587.7 872 587C877.5 586.3 884.5 586.0 890 584.5C895.5 583.0 900.0 580.6 905 578C910.0 575.4 915.8 572.0 920 569C924.2 566.0 926.7 563.2 930 560C933.3 556.8 936.3 553.4 940 550C943.7 546.6 948.7 542.4 952 539.5C955.3 536.6 957.0 534.9 960 532.5C963.0 530.1 967.2 526.8 970 525C972.8 523.2 975.8 522.5 977 522" stroke="#ff0000" stroke-width="2" fill="none" stroke-linejoin="round" clip-path="url(#cc)"/>
<path d="M185.5 123.0L179.5 131.5L185.5 129.0zM329.5 346.5L323.5 355L329.5 352.5zM401.5 341.5L395.5 350L401.5 347.5zM441.5 408.0L435.5 416.5L441.5 414.0zM529.5 306.0L523.5 314.5L529.5 312.0zM633.5 502.0L627.5 510.5L633.5 508.0zM689.5 536.0L683.5 544.5L689.5 542.0zM745.5 476.5L739.5 485L745.5 482.5zM865.5 492.5L859.5 501L865.5 498.5zM889.5 433.0L883.5 441.5L889.5 439.0zM961.5 469.5L955.5 478L961.5 475.5zM41.5 532.5L47.5 524L41.5 526.5zM65.5 505.5L71.5 497L65.5 499.5zM201.5 364.0L207.5 355.5L201.5 358.0zM233.5 393.5L239.5 385L233.5 387.5zM257.5 414.5L263.5 406L257.5 408.5zM289.5 450.5L295.5 442L289.5 444.5zM313.5 470.5L319.5 462L313.5 464.5zM361.5 506.5L367.5 498L361.5 500.5zM425.5 523.5L431.5 515L425.5 517.5zM473.5 508.5L479.5 500L473.5 502.5zM681.5 633.5L687.5 625L681.5 627.5zM713.5 603.5L719.5 595L713.5 597.5zM737.5 573.5L743.5 565L737.5 567.5zM801.5 682.0L807.5 673.5L801.5 676.0z" fill="#ff0000" stroke="#ff0000" stroke-width="0.8"/>
<path d="M185.5 123.0L191.5 131.5L185.5 129.0M329.5 346.5L335.5 355L329.5 352.5M401.5 341.5L407.5 350L401.5 347.5M441.5 408.0L447.5 416.5L441.5 414.0M529.5 306.0L535.5 314.5L529.5 312.0M633.5 502.0L639.5 510.5L633.5 508.0M689.5 536.0L695.5 544.5L689.5 542.0M745.5 476.5L751.5 485L745.5 482.5M865.5 492.5L871.5 501L865.5 498.5M889.5 433.0L895.5 441.5L889.5 439.0M961.5 469.5L967.5 478L961.5 475.5M41.5 532.5L35.5 524L41.5 526.5M65.5 505.5L59.5 497L65.5 499.5M201.5 364.0L195.5 355.5L201.5 358.0M233.5 393.5L227.5 385L233.5 387.5M257.5 414.5L251.5 406L257.5 408.5M289.5 450.5L283.5 442L289.5 444.5M313.5 470.5L307.5 462L313.5 464.5M361.5 506.5L355.5 498L361.5 500.5M425.5 523.5L419.5 515L425.5 517.5M473.5 508.5L467.5 500L473.5 502.5M681.5 633.5L675.5 625L681.5 627.5M713.5 603.5L707.5 595L713.5 597.5M737.5 573.5L731.5 565L737.5 567.5M801.5 682.0L795.5 673.5L801.5 676.0" fill="none" stroke="#ff0000" stroke-width="1"/>
<path d="M1009 585L1017 593H1012.5V604.5H1005.5V593H1001z" fill="#fff" stroke="#ff0000" stroke-width="2" stroke-linejoin="miter"/>
<g shape-rendering="crispEdges">
<path d="M8.5 109V684M8 109.5H1240M1239.5 109V684M8 683.5H1240" stroke="#000" stroke-width="1" fill="none"/>
<path d="M1240 119.5h2 M1240 152.5h2 M1240 185.5h2 M1240 218.5h2 M1240 251.5h2 M1240 284.5h2 M1240 317.5h2 M1240 350.5h2 M1240 383.5h2 M1240 416.5h2 M1240 449.5h2 M1240 482.5h2 M1240 515.5h2 M1240 548.5h2 M1240 581.5h2 M1240 614.5h2 M1240 647.5h2 M1240 680.5h2" stroke="#000" stroke-width="1"/>
<path d="M9.5 684v3 M73.5 684v3 M137.5 684v3 M201.5 684v3 M265.5 684v3 M329.5 684v3 M393.5 684v3 M457.5 684v3 M521.5 684v3 M585.5 684v3 M649.5 684v3 M713.5 684v3 M777.5 684v3 M841.5 684v3 M905.5 684v3 M969.5 684v3" stroke="#000" stroke-width="1"/>
<rect x="1242" y="555" width="39" height="11" fill="#000"/>
<rect x="1242" y="577" width="39" height="11" fill="#ff0000"/>
</g>
<text x="1245" y="122" textLength="32" lengthAdjust="spacingAndGlyphs" stroke="#000">0.97800</text>
<text x="1245" y="155" textLength="32" lengthAdjust="spacingAndGlyphs" stroke="#000">0.97275</text>
<text x="1245" y="188" textLength="32" lengthAdjust="spacingAndGlyphs" stroke="#000">0.96735</text>
<text x="1245" y="221" textLength="32" lengthAdjust="spacingAndGlyphs" stroke="#000">0.96195</text>
<text x="1245" y="254" textLength="32" lengthAdjust="spacingAndGlyphs" stroke="#000">0.95670</text>
<text x="1245" y="287" textLength="32" lengthAdjust="spacingAndGlyphs" stroke="#000">0.95130</text>
<text x="1245" y="320" textLength="32" lengthAdjust="spacingAndGlyphs" stroke="#000">0.94590</text>
<text x="1245" y="353" textLength="32" lengthAdjust="spacingAndGlyphs" stroke="#000">0.94065</text>
<text x="1245" y="386" textLength="32" lengthAdjust="spacingAndGlyphs" stroke="#000">0.93525</text>
<text x="1245" y="419" textLength="32" lengthAdjust="spacingAndGlyphs" stroke="#000">0.93000</text>
<text x="1245" y="452" textLength="32" lengthAdjust="spacingAndGlyphs" stroke="#000">0.92460</text>
<text x="1245" y="485" textLength="32" lengthAdjust="spacingAndGlyphs" stroke="#000">0.91920</text>
<text x="1245" y="518" textLength="32" lengthAdjust="spacingAndGlyphs" stroke="#000">0.91395</text>
<text x="1245" y="551" textLength="32" lengthAdjust="spacingAndGlyphs" stroke="#000">0.90855</text>
<text x="1245" y="617" textLength="32" lengthAdjust="spacingAndGlyphs" stroke="#000">0.89790</text>
<text x="1245" y="650" textLength="32" lengthAdjust="spacingAndGlyphs" stroke="#000">0.89250</text>
<text x="1245" y="683" textLength="32" lengthAdjust="spacingAndGlyphs" stroke="#000">0.88725</text>
<text x="1245" y="564" fill="#fff" stroke="#fff" textLength="32" lengthAdjust="spacingAndGlyphs">0.90651</text>
<text x="1245" y="586" fill="#fff" stroke="#fff" textLength="32" lengthAdjust="spacingAndGlyphs">0.90296</text>
<text x="8" y="696.4" stroke="#000" textLength="44" lengthAdjust="spacingAndGlyphs">7 Jun 2013</text>
<text x="72" y="696.4" stroke="#000" textLength="49" lengthAdjust="spacingAndGlyphs">19 Jun 2013</text>
<text x="136" y="696.4" stroke="#000" textLength="41" lengthAdjust="spacingAndGlyphs">1 Jul 2013</text>
<text x="200" y="696.4" stroke="#000" textLength="46" lengthAdjust="spacingAndGlyphs">11 Jul 2013</text>
<text x="264" y="696.4" stroke="#000" textLength="46" lengthAdjust="spacingAndGlyphs">23 Jul 2013</text>
<text x="328" y="696.4" stroke="#000" textLength="47" lengthAdjust="spacingAndGlyphs">2 Aug 2013</text>
<text x="392" y="696.4" stroke="#000" textLength="52" lengthAdjust="spacingAndGlyphs">14 Aug 2013</text>
<text x="456" y="696.4" stroke="#000" textLength="52" lengthAdjust="spacingAndGlyphs">26 Aug 2013</text>
<text x="520" y="696.4" stroke="#000" textLength="46" lengthAdjust="spacingAndGlyphs">5 Sep 2013</text>
<text x="584" y="696.4" stroke="#000" textLength="51" lengthAdjust="spacingAndGlyphs">17 Sep 2013</text>
<text x="648" y="696.4" stroke="#000" textLength="51" lengthAdjust="spacingAndGlyphs">27 Sep 2013</text>
<text x="712" y="696.4" stroke="#000" textLength="45" lengthAdjust="spacingAndGlyphs">9 Oct 2013</text>
<text x="776" y="696.4" stroke="#000" textLength="50" lengthAdjust="spacingAndGlyphs">21 Oct 2013</text>
<text x="840" y="696.4" stroke="#000" textLength="50" lengthAdjust="spacingAndGlyphs">30 Oct 2013</text>
<text x="904" y="696.4" stroke="#000" textLength="52" lengthAdjust="spacingAndGlyphs">11 Nov 2013</text>
<text x="968" y="696.4" stroke="#000" textLength="52" lengthAdjust="spacingAndGlyphs">21 Nov 2013</text>
<rect x="1213.5" y="299" width="24.5" height="9" fill="#fff"/>
<text x="1215.0" y="305.9" fill="#0000cd" stroke="#0000cd" textLength="22.5" lengthAdjust="spacingAndGlyphs">161.8</text>
<rect x="1213.5" y="436" width="24.5" height="9" fill="#fff"/>
<text x="1215.0" y="442.9" fill="#0000cd" stroke="#0000cd" textLength="22.5" lengthAdjust="spacingAndGlyphs">100.0</text>
<rect x="1218.5" y="521" width="19.5" height="9" fill="#fff"/>
<text x="1220.0" y="527.9" fill="#0000cd" stroke="#0000cd" textLength="17.5" lengthAdjust="spacingAndGlyphs">61.8</text>
<rect x="1218.5" y="547" width="19.5" height="9" fill="#fff"/>
<text x="1220.0" y="553.9" fill="#0000cd" stroke="#0000cd" textLength="17.5" lengthAdjust="spacingAndGlyphs">50.0</text>
<rect x="1218.5" y="573" width="19.5" height="9" fill="#fff"/>
<text x="1220.0" y="579.9" fill="#0000cd" stroke="#0000cd" textLength="17.5" lengthAdjust="spacingAndGlyphs">38.2</text>
<rect x="1218.5" y="606" width="19.5" height="9" fill="#fff"/>
<text x="1220.0" y="612.9" fill="#0000cd" stroke="#0000cd" textLength="17.5" lengthAdjust="spacingAndGlyphs">23.6</text>
<rect x="1223.5" y="658" width="14.5" height="9" fill="#fff"/>
<text x="1225.0" y="664.9" fill="#0000cd" stroke="#0000cd" textLength="12.5" lengthAdjust="spacingAndGlyphs">0.0</text>
<path d="M12 116h7l-3.5 4z" fill="#000"/>
<rect x="23" y="113" width="213" height="11" fill="#fff"/>
<text x="24" y="121.400" textLength="64" lengthAdjust="spacingAndGlyphs" stroke="#000">USDCHF,Daily</text>
<text x="94.6" y="121.400" textLength="32" lengthAdjust="spacingAndGlyphs" stroke="#000">0.91283</text>
<text x="131" y="121.400" textLength="32" lengthAdjust="spacingAndGlyphs" stroke="#000">0.91497</text>
<text x="166.7" y="121.400" textLength="32" lengthAdjust="spacingAndGlyphs" stroke="#000">0.90651</text>
<text x="202.7" y="121.400" textLength="32" lengthAdjust="spacingAndGlyphs" stroke="#000">0.90651</text>
<path d="M986.5 110h10l-5 5z" fill="#778899"/>
</svg>
<div class="abs" style="left:4px;top:702px;width:1280px;height:21px;background:#e1e1e1"></div>
<div class="abs" style="left:4px;top:703px;width:1280px;height:1px;background:#000"></div>
<div class="abs" style="left:96px;top:703px;width:89px;height:19px;background:#fff;border:1px solid #000;border-top:1px solid #fff"></div>
<div class="abs tab" style="left:17px">EURUSD,Daily</div>
<div class="abs tab" style="left:194.5px">GBPUSD,Daily</div>
<div class="abs tab" style="left:282.5px">USDJPY,H1</div>
<div class="abs tab" style="left:359px">EURJPY,Daily</div>
<div class="abs tab" style="left:446.5px">AUDNZD,H1</div>
<div class="abs tab" style="left:526.5px">USDCAD,H4</div>
<div class="abs tab" style="left:605px">NZDUSD,Daily</div>
<div class="abs tab" style="left:695.5px">AUDUSD,Daily</div>
<div class="abs tab" style="left:786.5px">XAUUSD,H4</div>
<div class="abs tab" style="left:866.5px">GBPCHF,Daily</div>
<div class="abs tab" style="left:954.5px">GBPJPY,H1</div>
<div class="abs tab" style="left:1030.5px">EURCHF,H4</div>
<div class="abs tab" style="left:1111.5px">EURGBP,H4</div>
<div class="abs tab" style="left:105.5px;color:#000">USDCHF,Daily</div>
<div class="abs tsep" style="left:272px"></div>
<div class="abs tsep" style="left:348px"></div>
<div class="abs tsep" style="left:436px"></div>
<div class="abs tsep" style="left:516px"></div>
<div class="abs tsep" style="left:596px"></div>
<div class="abs tsep" style="left:684px"></div>
<div class="abs tsep" style="left:776px"></div>
<div class="abs tsep" style="left:856px"></div>
<div class="abs tsep" style="left:944px"></div>
<div class="abs tsep" style="left:1020px"></div>
<div class="abs tsep" style="left:1101px"></div>
<div class="abs tsep" style="left:1180px"></div>
<div class="abs" style="left:4px;top:722px;width:1280px;height:22px;background:#e1e1e1"></div>
<div class="abs st" style="left:5.5px">Для справки, нажмите F1</div>
<div class="abs st" style="left:568px">Default</div>
<div class="abs st" style="left:677px">2013.10.30 00:00</div>
<div class="abs st" style="left:779px">O: 0.89862</div>
<div class="abs st" style="left:850px">H: 0.90242</div>
<div class="abs st" style="left:921.5px">L: 0.89483</div>
<div class="abs st" style="left:990.5px">C: 0.89908</div>
<div class="abs st" style="left:1062px">V: 38369</div>
<div class="abs st" style="left:1178.5px">303/3 kb</div>
<div class="abs ssep" style="left:563px"></div>
<div class="abs ssep" style="left:672px"></div>
<div class="abs ssep" style="left:773px"></div>
<div class="abs ssep" style="left:845px"></div>
<div class="abs ssep" style="left:916px"></div>
<div class="abs ssep" style="left:985px"></div>
<div class="abs ssep" style="left:1056px"></div>
<div class="abs ssep" style="left:1122px"></div>
<div class="abs" style="left:4px;top:744px;width:1280px;height:4px;background:#7c7c7c;border-top:1px solid #4a4a4a"></div>
<div class="abs" style="left:4px;top:744px;width:41px;height:4px;background:#f08a1c;border-top:1px solid #a55a10;border-radius:0 4px 0 0"></div>
<svg class="abs" style="left:0;top:0" width="1288" height="748" viewBox="0 0 1288 748" shape-rendering="crispEdges"><rect x="1128" y="729" width="2" height="9" fill="#4a7a00"/><rect x="1128" y="739" width="2" height="2" fill="#8e0000"/><rect x="1131" y="729" width="2" height="8" fill="#4a7a00"/><rect x="1131" y="738" width="2" height="3" fill="#8e0000"/><rect x="1134" y="729" width="2" height="7" fill="#4a7a00"/><rect x="1134" y="737" width="2" height="4" fill="#8e0000"/><rect x="1137" y="729" width="2" height="6" fill="#4a7a00"/><rect x="1137" y="736" width="2" height="5" fill="#8e0000"/><rect x="1140" y="729" width="2" height="5" fill="#4a7a00"/><rect x="1140" y="735" width="2" height="6" fill="#8e0000"/><rect x="1143" y="729" width="2" height="4" fill="#4a7a00"/><rect x="1143" y="734" width="2" height="7" fill="#8e0000"/><rect x="1146" y="729" width="2" height="3" fill="#4a7a00"/><rect x="1146" y="733" width="2" height="8" fill="#8e0000"/><rect x="1149" y="729" width="2" height="2" fill="#4a7a00"/><rect x="1149" y="732" width="2" height="9" fill="#8e0000"/></svg>
<div class="abs" style="left:4px;top:106px;width:2px;height:596px;background:#85826f"></div>
<div class="abs" style="left:4px;top:704px;width:2px;height:18px;background:#85826f"></div>
<div class="abs" style="left:1282px;top:107px;width:2px;height:615px;background:#f0f0f0"></div>
<div class="abs" style="left:4px;top:723px;width:1280px;height:1px;background:#fff"></div>
<svg class="abs" style="left:1250px;top:704px" width="34" height="40" viewBox="0 0 34 40"><path d="M9.500 6v6.500l-4-3.200zM23 6v6.500l4-3.200z" fill="#a0a0a0"/><path d="M21 39.500l13-13M25 39.500l9-9M29 39.500l5-5" stroke="#8a8a8a" stroke-width="1.200"/><path d="M22 39.500l12-12M26 39.500l8-8M30 39.500l4-4" stroke="#fff" stroke-width="1"/></svg>
</body></html>
